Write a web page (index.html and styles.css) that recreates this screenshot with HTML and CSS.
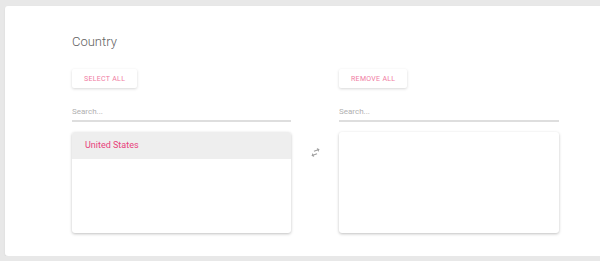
FILE: index.html
```html
<!DOCTYPE html>
<html lang="en">
<head>
    <meta charset="UTF-8">
    <meta name="viewport" content="width=device-width, initial-scale=1.0">
    <title>Country</title>
    <link rel="stylesheet" href="styles.css">
</head>
<body>
    <div class="card">
        <h2 class="title">Country</h2>
        <div class="picker">
            <div class="side">
                <button class="pick-btn">Select all</button>
                <input class="search" type="text" placeholder="Search...">
                <ul class="list">
                    <li class="item selected">United States</li>
                </ul>
            </div>
            <div class="middle">
                <svg class="swap" viewBox="0 0 24 24" width="13" height="13">
                    <path d="M6.99 11L3 15l3.99 4v-3H14v-2H6.99v-3zM21 9l-3.99-4v3H10v2h7.01v3L21 9z" fill="#9e9e9e"/>
                </svg>
            </div>
            <div class="side right">
                <button class="pick-btn">Remove all</button>
                <input class="search" type="text" placeholder="Search...">
                <ul class="list"></ul>
            </div>
        </div>
    </div>
</body>
</html>
```

FILE: styles.css
```css
body {
    margin: 0;
    background: #e8e8e8;
    font-family: Roboto, "Liberation Sans", sans-serif;
    overflow: hidden;
}
.card {
    margin: 6px -6px 0 5px;
    background: white;
    border-radius: 3px;
    padding: 28px 0 23px 67px;
    box-shadow: 0 1px 2px rgba(0, 0, 0, 0.08);
}
.title {
    margin: 0;
    font-size: 13px;
    line-height: 16px;
    font-weight: 300;
    color: #616161;
}
.picker {
    display: grid;
    grid-template-columns: 219px 48px 220px;
    margin-top: 19px;
}
.side {
    display: flex;
    flex-direction: column;
    align-items: flex-start;
}
.pick-btn {
    height: 19px;
    padding: 0 12px;
    border: none;
    border-radius: 2px;
    background: white;
    box-shadow: 0 1px 3px rgba(0, 0, 0, 0.16);
    color: #f07aa2;
    font-family: Roboto, "Liberation Sans", sans-serif;
    font-size: 7px;
    letter-spacing: 0.3px;
    text-transform: uppercase;
    cursor: pointer;
}
.search {
    width: 100%;
    box-sizing: border-box;
    margin-top: 14px;
    height: 20px;
    padding: 0;
    border: none;
    border-bottom: 2px solid #dedede;
    font-family: Roboto, "Liberation Sans", sans-serif;
    font-size: 8px;
    color: #555;
    outline: none;
}
.search::placeholder {
    color: #b0b0b0;
}
.list {
    width: 100%;
    height: 101px;
    margin: 10px 0 0;
    padding: 0;
    list-style: none;
    background: white;
    border-radius: 3px;
    box-shadow: 0 1px 3px rgba(0, 0, 0, 0.25);
    overflow: hidden;
}
.item {
    height: 27px;
    line-height: 27px;
    padding-left: 13px;
    font-size: 9px;
    color: #e8417a;
}
.item.selected {
    background: #eeeeee;
}
.middle {
    display: flex;
    justify-content: center;
    padding-top: 77px;
}
.swap {
    transform: rotate(-20deg);
}
```
